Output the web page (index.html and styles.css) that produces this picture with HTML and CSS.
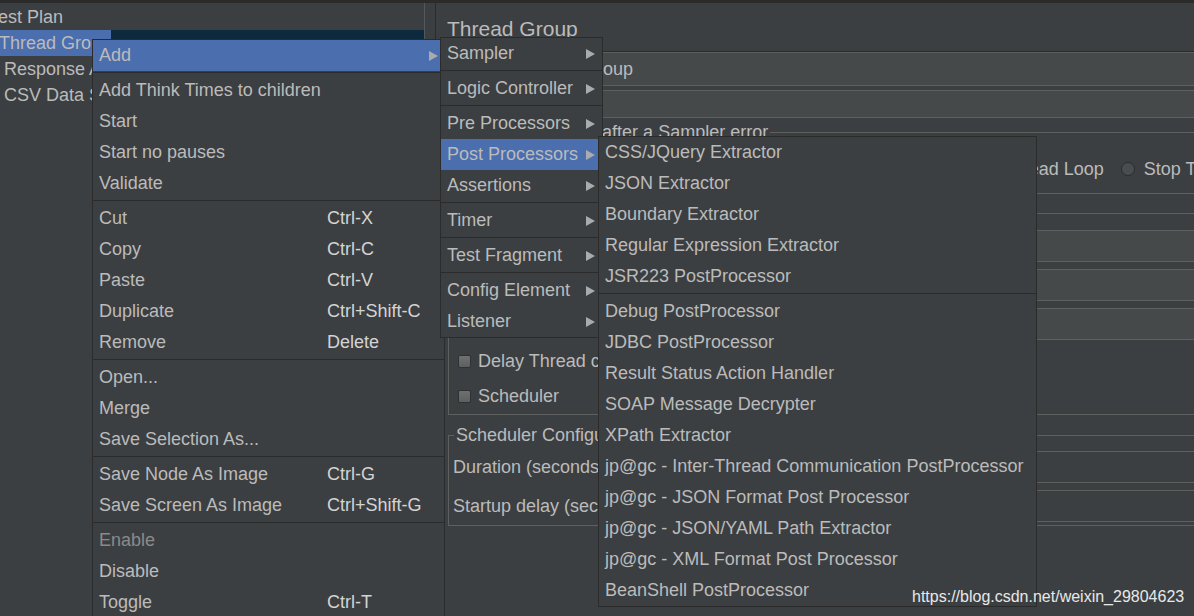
FILE: index.html
```html
<!DOCTYPE html>
<html lang="en">
<head>
<meta charset="utf-8">
<title>Apache JMeter - Thread Group</title>
<link rel="stylesheet" href="styles.css">
</head>
<body>
<div class="app">
  <div class="topband"></div>
  <div class="workspace">
    <div class="tree">
      <div class="node root"><span class="label">Test Plan</span></div>
      <div class="node sel"><span class="label">Thread Group</span></div>
      <div class="node child"><span class="label">Response Assertion</span></div>
      <div class="node child"><span class="label">CSV Data Set Config</span></div>
    </div>
    <div class="splitter"></div>
    <div class="editor">
      <div class="editor-inner">
        <div class="title">Thread Group</div>
        <div class="name-row">
          <span class="row-label">Name:</span>
          <div class="textfield name-field">Thread Group</div>
        </div>
        <div class="comments-row">
          <span class="row-label wide">Comments:</span>
          <div class="textfield comments-field"></div>
        </div>
        <fieldset class="group action-group">
          <legend>Action to be taken after a Sampler error</legend>
          <div class="radio-row">
            <span class="radio"><span class="dot"></span>Continue</span>
            <span class="radio"><span class="dot"></span>Start Next Thread Loop</span>
            <span class="radio"><span class="dot"></span>Stop Thread</span>
            <span class="radio"><span class="dot"></span>Stop Test</span>
            <span class="radio"><span class="dot"></span>Stop Test Now</span>
          </div>
        </fieldset>
        <fieldset class="group props-group">
          <legend>Thread Properties</legend>
          <div class="field-row"><span class="field-label">Number of Threads (users):</span><div class="textfield">1</div></div>
          <div class="field-row"><span class="field-label">Ramp-up period (seconds):</span><div class="textfield">1</div></div>
          <div class="field-row"><span class="field-label">Loop Count:</span><div class="textfield">1</div></div>
          <div class="check-row first"><span class="check"></span>Delay Thread creation until needed</div>
          <div class="check-row"><span class="check"></span>Scheduler</div>
        </fieldset>
        <fieldset class="group sched-group">
          <legend>Scheduler Configuration</legend>
          <div class="field-row disabled"><span class="field-label">Duration (seconds)</span><div class="textfield"></div></div>
          <div class="field-row disabled"><span class="field-label">Startup delay (seconds)</span><div class="textfield"></div></div>
        </fieldset>
      </div>
    </div>
  </div>
</div>

<div class="menu menu-main">
  <div class="item hl"><span class="text">Add</span><svg class="arrow" width="9" height="10" viewBox="0 0 9 10"><path d="M0 0L9 5L0 10Z"/></svg></div>
  <div class="sep"></div>
  <div class="item"><span class="text">Add Think Times to children</span></div>
  <div class="item"><span class="text">Start</span></div>
  <div class="item"><span class="text">Start no pauses</span></div>
  <div class="item"><span class="text">Validate</span></div>
  <div class="sep"></div>
  <div class="item"><span class="text">Cut</span><span class="key">Ctrl-X</span></div>
  <div class="item"><span class="text">Copy</span><span class="key">Ctrl-C</span></div>
  <div class="item"><span class="text">Paste</span><span class="key">Ctrl-V</span></div>
  <div class="item"><span class="text">Duplicate</span><span class="key">Ctrl+Shift-C</span></div>
  <div class="item"><span class="text">Remove</span><span class="key">Delete</span></div>
  <div class="sep"></div>
  <div class="item"><span class="text">Open...</span></div>
  <div class="item"><span class="text">Merge</span></div>
  <div class="item"><span class="text">Save Selection As...</span></div>
  <div class="sep"></div>
  <div class="item"><span class="text">Save Node As Image</span><span class="key">Ctrl-G</span></div>
  <div class="item"><span class="text">Save Screen As Image</span><span class="key">Ctrl+Shift-G</span></div>
  <div class="sep"></div>
  <div class="item disabled"><span class="text">Enable</span></div>
  <div class="item"><span class="text">Disable</span></div>
  <div class="item"><span class="text">Toggle</span><span class="key">Ctrl-T</span></div>
</div>

<div class="menu menu-add">
  <div class="item"><span class="text">Sampler</span><svg class="arrow" width="9" height="10" viewBox="0 0 9 10"><path d="M0 0L9 5L0 10Z"/></svg></div>
  <div class="sep"></div>
  <div class="item"><span class="text">Logic Controller</span><svg class="arrow" width="9" height="10" viewBox="0 0 9 10"><path d="M0 0L9 5L0 10Z"/></svg></div>
  <div class="sep"></div>
  <div class="item"><span class="text">Pre Processors</span><svg class="arrow" width="9" height="10" viewBox="0 0 9 10"><path d="M0 0L9 5L0 10Z"/></svg></div>
  <div class="item hl"><span class="text">Post Processors</span><svg class="arrow" width="9" height="10" viewBox="0 0 9 10"><path d="M0 0L9 5L0 10Z"/></svg></div>
  <div class="item"><span class="text">Assertions</span><svg class="arrow" width="9" height="10" viewBox="0 0 9 10"><path d="M0 0L9 5L0 10Z"/></svg></div>
  <div class="sep"></div>
  <div class="item"><span class="text">Timer</span><svg class="arrow" width="9" height="10" viewBox="0 0 9 10"><path d="M0 0L9 5L0 10Z"/></svg></div>
  <div class="sep"></div>
  <div class="item"><span class="text">Test Fragment</span><svg class="arrow" width="9" height="10" viewBox="0 0 9 10"><path d="M0 0L9 5L0 10Z"/></svg></div>
  <div class="sep"></div>
  <div class="item"><span class="text">Config Element</span><svg class="arrow" width="9" height="10" viewBox="0 0 9 10"><path d="M0 0L9 5L0 10Z"/></svg></div>
  <div class="item"><span class="text">Listener</span><svg class="arrow" width="9" height="10" viewBox="0 0 9 10"><path d="M0 0L9 5L0 10Z"/></svg></div>
</div>

<div class="menu menu-post">
  <div class="item"><span class="text">CSS/JQuery Extractor</span></div>
  <div class="item"><span class="text">JSON Extractor</span></div>
  <div class="item"><span class="text">Boundary Extractor</span></div>
  <div class="item"><span class="text">Regular Expression Extractor</span></div>
  <div class="item"><span class="text">JSR223 PostProcessor</span></div>
  <div class="sep"></div>
  <div class="item"><span class="text">Debug PostProcessor</span></div>
  <div class="item"><span class="text">JDBC PostProcessor</span></div>
  <div class="item"><span class="text">Result Status Action Handler</span></div>
  <div class="item"><span class="text">SOAP Message Decrypter</span></div>
  <div class="item"><span class="text">XPath Extractor</span></div>
  <div class="item"><span class="text">jp@gc - Inter-Thread Communication PostProcessor</span></div>
  <div class="item"><span class="text">jp@gc - JSON Format Post Processor</span></div>
  <div class="item"><span class="text">jp@gc - JSON/YAML Path Extractor</span></div>
  <div class="item"><span class="text">jp@gc - XML Format Post Processor</span></div>
  <div class="item"><span class="text">BeanShell PostProcessor</span></div>
</div>

<div class="watermark">https://blog.csdn.net/weixin_29804623</div>
</body>
</html>
```

FILE: styles.css
```css
* { box-sizing: border-box; }
html, body { margin: 0; padding: 0; }
body {
  width: 1194px;
  height: 616px;
  overflow: hidden;
  position: relative;
  background: #3c3f41;
  color: #bbbbbb;
  font-family: "Liberation Sans", Arial, sans-serif;
  font-size: 18px;
}

.app { display: flex; flex-direction: column; height: 616px; }
.topband { flex: none; height: 3px; background: #2b2b2b; }
.workspace { flex: 1; display: flex; min-height: 0; }

/* tree */
.tree {
  flex: none;
  width: 425px;
  border-right: 1px solid #55585a;
  padding-top: 1px;
  overflow: hidden;
}
.node { height: 26px; line-height: 26px; white-space: nowrap; }
.node .label { display: inline-block; }
.node.root .label { margin-left: -11px; }
.node.sel { background: #0d293e; }
.node.sel .label { background: #4b6eaf; margin-left: -1px; }
.node.child .label { margin-left: 4px; }

.splitter { flex: none; width: 10px; }

/* editor */
.editor {
  flex: 1;
  min-width: 0;
  border-left: 1px solid #2b2b2b;
  overflow: hidden;
}
.editor-inner { width: 1000px; }
.title {
  height: 48px;
  padding: 4px 0 0 11px;
  line-height: 44px;
  font-size: 21px;
}
.name-row {
  display: flex;
  border-top: 1px solid #2b2b2b;
  padding-left: 11px;
}
.row-label { flex: none; width: 60px; line-height: 34px; white-space: nowrap; }
.row-label.wide { width: 95px; line-height: 28px; }
.textfield {
  flex: 1;
  background: #45494a;
  border: 1px solid #5e6060;
  white-space: nowrap;
}
.name-field { height: 34px; line-height: 32px; padding-left: 13px; }
.comments-row { display: flex; margin-top: 4px; padding-left: 11px; }
.comments-field { height: 28px; }

/* titled groups */
.group {
  margin: 0 0 0 12px;
  padding: 0;
  border: 1px solid #5e6060;
  min-width: 0;
}
.group legend {
  padding: 0 2px;
  line-height: 20px;
  font-size: 18px;
  white-space: nowrap;
}
.action-group { margin-top: 4px; padding-bottom: 11px; }
.action-group legend { margin-left: 2px; }
.radio-row {
  margin: 14px 0 0 333px;
  height: 26px;
  display: flex;
  align-items: center;
  white-space: nowrap;
}
.radio { display: flex; align-items: center; margin-right: 17px; }
.dot {
  width: 14px;
  height: 14px;
  border-radius: 50%;
  background: #4a4d4f;
  border: 1px solid #2b2b2b;
  margin-right: 9px;
}

.props-group { margin-top: 9px; }
.props-group legend { margin-left: 5px; }
.field-row { display: flex; height: 32px; margin-top: 7px; }
.field-label { flex: none; width: 205px; padding-left: 4px; line-height: 32px; white-space: nowrap; }
.field-row .textfield { padding-left: 6px; line-height: 30px; }
.field-row.disabled .textfield { background: transparent; }

.check-row {
  display: flex;
  align-items: center;
  height: 35px;
  padding-left: 9px;
  white-space: nowrap;
}
.check-row.first { margin-top: 4px; }
.check {
  width: 13px;
  height: 13px;
  border: 1px solid #2f3133;
  border-radius: 2px;
  background: linear-gradient(#6e7072, #5d5f61);
  margin-right: 7px;
}

.sched-group { margin-top: 10px; padding-bottom: 3px; }
.sched-group legend { margin-left: 5px; }
.sched-group .field-row:first-of-type { margin-top: 6px; }

/* popup menus */
.menu {
  position: absolute;
  background: #3c3f41;
  border: 1px solid #2b2b2b;
  white-space: nowrap;
}
.menu-main { left: 92px; top: 39px; width: 353px; height: 620px; z-index: 1; }
.menu-add { left: 440px; top: 37px; width: 163px; z-index: 2; }
.menu-post { left: 598px; top: 136px; width: 439px; z-index: 3; }

.item {
  display: flex;
  align-items: center;
  height: 31px;
  padding: 0 6px;
}
.item .text { flex: none; }
.menu-main .item .text { width: 228px; }
.item .key { color: #d4d4d4; }
.item .arrow { display: block; margin-left: auto; fill: #a9abad; }
.menu-add .item { padding-right: 7px; }
.item.hl { background: #4b6eaf; }
.item.disabled { color: #8a8a8a; }
.sep { height: 4px; padding-top: 1px; }
.sep::before { content: ""; display: block; height: 1px; background: #2b2b2b; }

.watermark {
  position: absolute;
  left: 912px;
  top: 588px;
  z-index: 10;
  font-size: 16px;
  line-height: 18px;
  color: #e8e8e8;
  white-space: nowrap;
}
```
